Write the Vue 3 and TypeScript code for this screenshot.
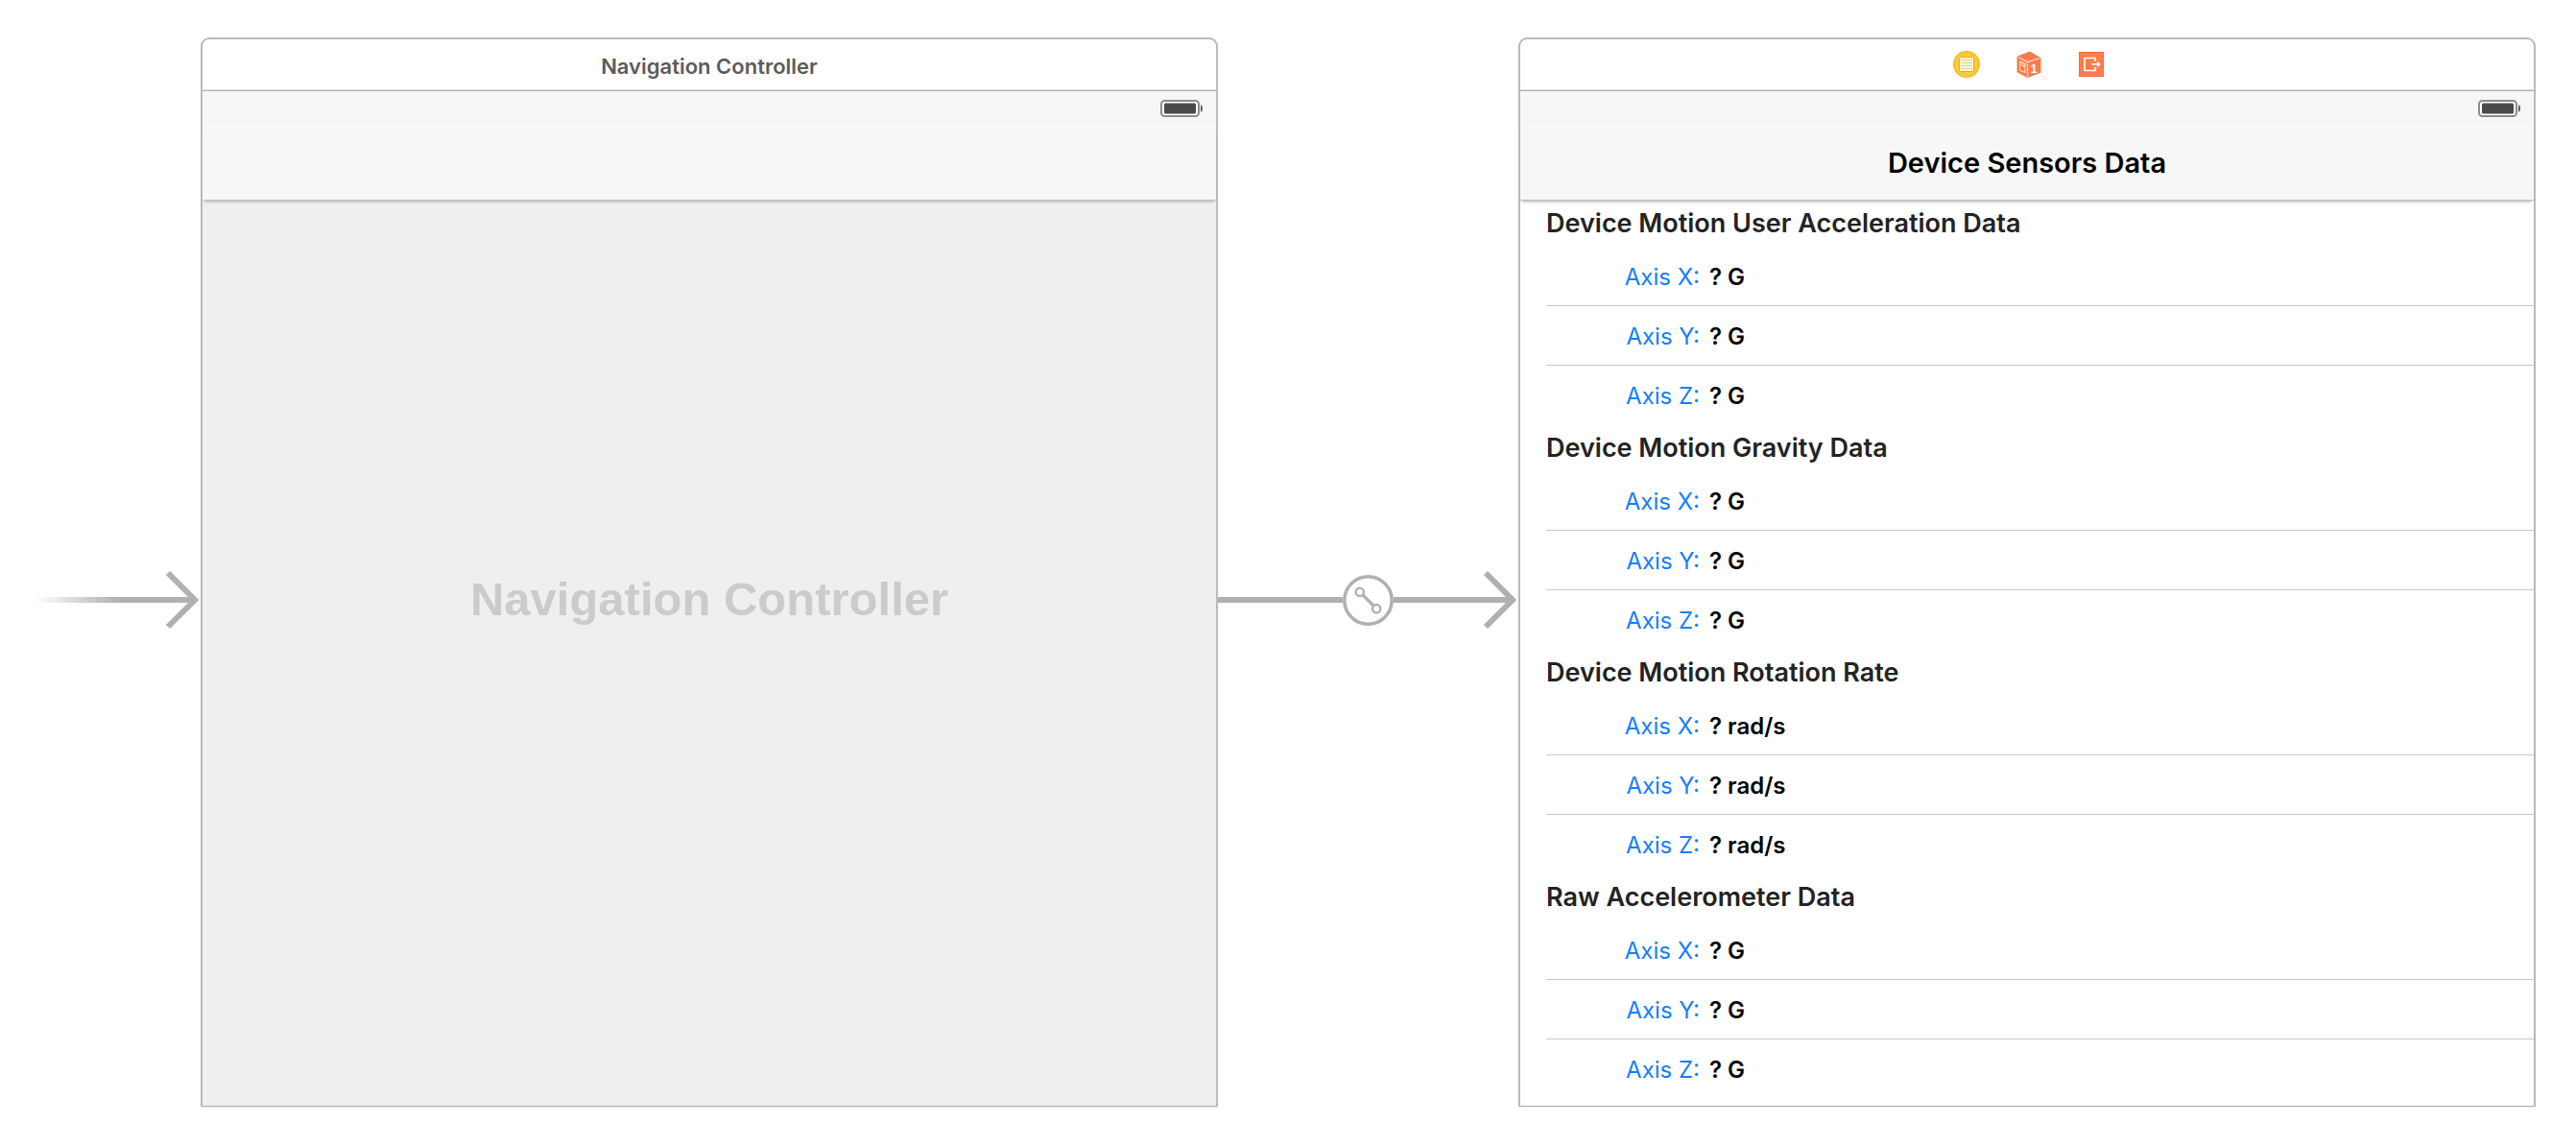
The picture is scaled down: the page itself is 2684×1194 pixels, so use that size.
<script setup lang="ts">
interface SensorSection {
  title: string
  unit: string
}

const axes: string[] = ['X', 'Y', 'Z']

const sections: SensorSection[] = [
  { title: 'Device Motion User Acceleration Data', unit: 'G' },
  { title: 'Device Motion Gravity Data', unit: 'G' },
  { title: 'Device Motion Rotation Rate', unit: 'rad/s' },
  { title: 'Raw Accelerometer Data', unit: 'G' },
]
</script>

<template>
  <main class="canvas">
    <div class="link entry" aria-hidden="true">
      <span class="line fade"></span>
      <svg class="head" width="36" height="62" viewBox="0 0 36 62">
        <path d="M0 31H30M3 3l28 28L3 59" />
      </svg>
    </div>

    <section class="scene">
      <header class="dock">
        <h2 class="scene-name">Navigation Controller</h2>
      </header>
      <div class="status">
        <svg class="battery" width="44" height="18" viewBox="0 0 44 18" aria-label="Battery">
          <rect x="1" y="1" width="39" height="16" rx="3.5" fill="#fff" stroke="#8c8c8c" stroke-width="2" />
          <rect x="4" y="3.6" width="33" height="10.8" rx="1.5" fill="#4a4a4a" />
          <path d="M42 5.2c1.3.4 2 1.8 2 3.8s-.7 3.4-2 3.8z" fill="#5a5a5a" />
        </svg>
      </div>
      <div class="navbar"></div>
      <div class="body placeholder">
        <p class="placeholder-name">Navigation Controller</p>
      </div>
    </section>

    <div class="link" aria-hidden="true">
      <span class="arm"><span class="line"></span></span>
      <svg class="segue" width="53" height="53" viewBox="0 0 53 53">
        <circle cx="26.5" cy="26.5" r="24.7" stroke-width="3.5" />
        <circle cx="17.8" cy="17.8" r="4.2" stroke-width="2.4" />
        <circle cx="35.2" cy="35.2" r="4.2" stroke-width="2.4" />
        <path d="M21 21l11 11" stroke-width="3.2" />
      </svg>
      <span class="arm">
        <span class="line"></span>
        <svg class="head" width="36" height="62" viewBox="0 0 36 62">
          <path d="M0 31H30M3 3l28 28L3 59" />
        </svg>
      </span>
    </div>

    <section class="scene">
      <header class="dock tools">
        <button class="dock-item" type="button" aria-label="View Controller">
          <svg width="28" height="28" viewBox="0 0 28 28">
            <circle cx="14" cy="14" r="13.3" fill="#fecb2f" stroke="#eeb83a" stroke-width="1.4" />
            <rect x="6.5" y="6.5" width="15" height="15" rx="1.5" fill="#fff8df" stroke="#e3ab2c" stroke-width="1" />
            <path d="M8 9.5h12M8 12.5h12M8 15.5h12M8 18.5h12" stroke="#ecd183" stroke-width="1" />
          </svg>
        </button>
        <button class="dock-item" type="button" aria-label="First Responder">
          <svg width="28" height="28" viewBox="0 0 28 28">
            <path d="M15 1L2 6v16l10.5 5.5L26 22.5V7.5z" fill="#fb7c4b" stroke="#ec6c3c" stroke-width=".8" stroke-linejoin="round" />
            <path d="M2.5 6.5L12.5 11.5L25.5 7.5M12.5 11.5V27" fill="none" stroke="#ffe0d3" stroke-width="1.3" />
            <path d="M4.5 11l5.5 2.5v9l-5.5-2.500zM6 12v3l3 1.3v-3" fill="none" stroke="#ffd9c9" stroke-width="1.1" stroke-linejoin="round" />
            <text x="15.5" y="23" class="cube-digit">1</text>
          </svg>
        </button>
        <button class="dock-item" type="button" aria-label="Exit">
          <svg width="28" height="28" viewBox="0 0 28 28">
            <rect x="1.5" y="1.5" width="25" height="25" fill="#fc7d4b" stroke="#ee6e3f" stroke-width="1" />
            <path d="M18 11V7.5H7v13h11V17" fill="none" stroke="#fff" stroke-width="1.6" />
            <path d="M14.5 13.2h5.5V10.5l3.8 3.5-3.8 3.5v-2.7h-5.5z" fill="#fff" />
          </svg>
        </button>
      </header>
      <div class="status">
        <svg class="battery" width="44" height="18" viewBox="0 0 44 18" aria-label="Battery">
          <rect x="1" y="1" width="39" height="16" rx="3.5" fill="#fff" stroke="#8c8c8c" stroke-width="2" />
          <rect x="4" y="3.6" width="33" height="10.8" rx="1.5" fill="#4a4a4a" />
          <path d="M42 5.2c1.3.4 2 1.8 2 3.8s-.7 3.4-2 3.8z" fill="#5a5a5a" />
        </svg>
      </div>
      <div class="navbar">
        <h1 class="nav-title">Device Sensors Data</h1>
      </div>
      <div class="body">
        <section v-for="section in sections" :key="section.title" class="group">
          <h3 class="group-title">{{ section.title }}</h3>
          <table class="rows" :aria-label="section.title">
            <tbody>
              <tr v-for="axis in axes" :key="axis">
                <th scope="row">Axis {{ axis }}:</th>
                <td>? {{ section.unit }}</td>
              </tr>
            </tbody>
          </table>
        </section>
      </div>
    </section>
  </main>
</template>

<style>
body {
  background: #fff;
}
</style>

<style scoped>
.canvas {
  display: grid;
  grid-template-columns: 209fr 1060fr 313fr 1060fr 42fr;
  padding: 39px 0 40px;
  font-family: Inter, "Liberation Sans", sans-serif;
  color: #000;
}

.scene {
  box-sizing: border-box;
  min-width: 0;
  display: flex;
  flex-direction: column;
  border: 2px solid #bababa;
  border-bottom: 1px solid #b0b0b0;
  border-radius: 9px 9px 0 0;
  box-shadow: 0 1px #ececec;
}

.dock {
  box-sizing: border-box;
  height: 54px;
  display: flex;
  align-items: center;
  justify-content: center;
  gap: 37px;
  border-bottom: 1px solid #b0b0b0;
  box-shadow: inset 0 -1px #e2e2e2;
}

.tools {
  padding: 0 0 2px 4px;
}

.scene-name {
  margin: 0;
  padding-top: 2px;
  font-size: 22px;
  line-height: 28px;
  font-weight: 600;
  color: #5c5c5c;
}

.dock-item {
  display: flex;
  padding: 0;
  border: 0;
  background: none;
}

.cube-digit {
  font: 700 13px "Liberation Sans", sans-serif;
  fill: #fff;
}

.status {
  box-sizing: border-box;
  height: 36px;
  display: flex;
  align-items: center;
  justify-content: flex-end;
  padding-right: 14px;
  background: #f6f6f6;
  border-bottom: 1px solid #fdfdfd;
}

.navbar {
  box-sizing: border-box;
  height: 78px;
  display: flex;
  align-items: center;
  justify-content: center;
  background: #f7f7f7;
  border-bottom: 1px solid #c4c4c4;
  box-shadow: 0 3px 3px -2px #a8a8a8;
  position: relative;
}

.nav-title {
  margin: 0;
  font-size: 29px;
  line-height: 36px;
  font-weight: 600;
}

.body {
  flex: 1;
  padding-bottom: 7px;
}

.placeholder {
  background: #efefef;
}

.placeholder-name {
  margin: 0;
  padding-top: 387px;
  font-family: "Liberation Sans", sans-serif;
  font-size: 49px;
  line-height: 56px;
  font-weight: 700;
  text-align: center;
  color: #cbcbcb;
}

.group {
  padding-left: 27px;
}

.group-title {
  margin: 0;
  font-size: 27px;
  line-height: 48px;
  font-weight: 600;
  color: #232323;
}

.rows {
  width: 100%;
  border-spacing: 0;
  font-size: 24px;
  line-height: 30px;
}

.rows th,
.rows td {
  box-sizing: border-box;
  height: 62px;
  padding: 2px 0 0;
  border-bottom: 1px solid #c8c7cc;
}

.rows th {
  width: 160px;
  text-align: right;
  font-weight: 400;
  color: #157efb;
}

.rows td {
  padding-left: 10px;
  font-weight: 600;
}

.rows tr:last-child > * {
  border-bottom-color: transparent;
}

.link {
  display: flex;
  align-items: center;
  height: 62px;
  margin-top: 555px;
  padding-right: 1px;
}

.entry {
  padding-left: 36px;
}

.arm {
  flex: 1;
  display: flex;
  align-items: center;
}

.line {
  flex: 1;
  height: 6px;
  background: #b0b0b0;
}

.fade {
  background: linear-gradient(to right, transparent, #b0b0b0 65%);
}

.head {
  fill: none;
  stroke: #b0b0b0;
  stroke-width: 6;
}

.segue {
  fill: none;
  stroke: #b0b0b0;
}
</style>
